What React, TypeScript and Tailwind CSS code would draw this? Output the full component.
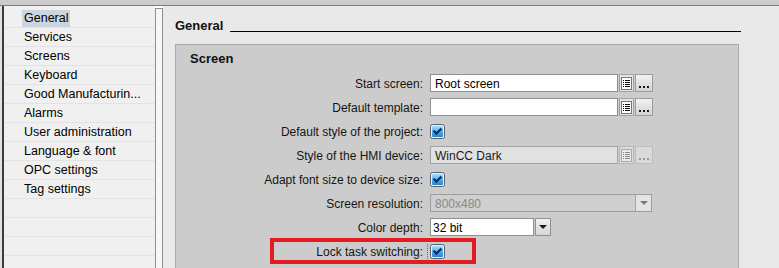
import React from "react";

const NAV_ITEMS = [
  "General",
  "Services",
  "Screens",
  "Keyboard",
  "Good Manufacturin...",
  "Alarms",
  "User administration",
  "Language & font",
  "OPC settings",
  "Tag settings",
  "",
  "",
  "",
  "",
];

const FONT = "font-['Liberation_Sans',Arial,sans-serif]";

function Checkbox() {
  return (
    <svg width="15" height="15" viewBox="0 0 15 15" className="block">
      <defs>
        <linearGradient id="cbFill" x1="0" y1="0" x2="0" y2="1">
          <stop offset="0" stopColor="#a8dcfb" />
          <stop offset="0.5" stopColor="#55b4f0" />
          <stop offset="1" stopColor="#2380d4" />
        </linearGradient>
      </defs>
      <rect x="0.5" y="0.5" width="14" height="14" rx="2" fill="#e8f2fa" stroke="#56626e" />
      <rect x="2" y="2" width="11" height="11" rx="1" fill="url(#cbFill)" />
      <path d="M3.6 6.8 L6.4 9.6 L11.4 4.6" stroke="#0b2f66" strokeWidth="2.2" fill="none" />
    </svg>
  );
}

function ListButton({ disabled }: { disabled?: boolean }) {
  const line = disabled ? "#8a8a8a" : "#111";
  return (
    <div
      className={
        disabled
          ? "w-[15px] h-[18px] ml-[1px] border border-[#b8b8b8] bg-[#dcdcdc] flex items-center justify-center"
          : "w-[15px] h-[18px] ml-[1px] border border-[#a0a0a0] bg-[#e6e6e6] flex items-center justify-center"
      }
    >
      <svg width="11" height="13" viewBox="0 0 11 13">
        <rect
          x="0.5"
          y="0.5"
          width="10"
          height="12"
          fill={disabled ? "#ececec" : "#ffffff"}
          stroke={disabled ? "#a8a8a8" : "#5b6fd8"}
        />
        {[3, 5, 7, 9].map((y) => (
          <g key={y}>
            <rect x="2" y={y} width="1" height="1" fill={line} />
            <rect x="4" y={y} width="5" height="1" fill={line} />
          </g>
        ))}
      </svg>
    </div>
  );
}

function DotsButton({ disabled }: { disabled?: boolean }) {
  return (
    <div
      className={
        disabled
          ? "w-[18px] h-[18px] ml-[1px] border border-[#bdbdbd] bg-[#dadada] flex items-end justify-center pb-[3px]"
          : "w-[18px] h-[18px] ml-[1px] border border-[#9c9c9c] bg-gradient-to-b from-[#f2f2f2] to-[#d2d2d2] flex items-end justify-center pb-[3px]"
      }
    >
      <svg width="10" height="2" viewBox="0 0 10 2">
        {[0, 4, 8].map((x) => (
          <rect key={x} x={x} y="0" width="2" height="2" fill={disabled ? "#9a9a9a" : "#1a1a1a"} />
        ))}
      </svg>
    </div>
  );
}

function Arrow({ disabled }: { disabled?: boolean }) {
  return (
    <svg width="8" height="4" viewBox="0 0 8 4">
      <path d="M0 0 H8 L4 4 Z" fill={disabled ? "#7a7a7a" : "#1a1a1a"} />
    </svg>
  );
}

function Row({ label, children }: { label?: string; children?: React.ReactNode }) {
  return (
    <div className="relative h-[24px] flex items-center">
      <div className="w-[248px] text-right pr-[1px] pt-[2px] text-[#151515]">{label}</div>
      <div className="ml-[6px] flex items-center">{children}</div>
    </div>
  );
}

export default function App() {
  return (
    <div className={`w-[779px] h-[268px] overflow-hidden flex flex-col text-[12px] ${FONT}`}>
      <div className="h-[6px] shrink-0 bg-[#cbcbcb] border-b border-[#7d7d7d]" />
      <div className="flex flex-1 min-h-0">
        <div className="w-[2px] bg-[#e2e2e2]" />
        <div className="w-[2px] bg-[#3a3d45]" />
        <div className="w-[151px] bg-[#f0f0f0] pt-[3px]">
          {NAV_ITEMS.map((item, i) => (
            <div key={i} className="h-[19px] border-b border-[#e3e3e3] pl-[18px] flex items-center text-black text-[12.5px]">
              {i === 0 ? (
                <span className="bg-[#cbd5df] px-[2px] h-[17px] flex items-center">{item}</span>
              ) : (
                <span className="px-[2px]">{item}</span>
              )}
            </div>
          ))}
        </div>
        <div className="w-[8px] mt-[2px] border-x border-t border-[#8e8e8e] bg-[#f7f7f7]" />
        <div className="flex-1 bg-[#e9e9e9] pl-[12px] pr-[38px] pt-[12px]">
          <div className="h-[16px] flex items-end">
            <span className="font-bold text-[13px] leading-[16px] text-[#111]">General</span>
            <div className="flex-1 h-[1px] bg-black ml-[7px] mb-[2px]" />
          </div>
          <div className="mt-[10px] mr-[2px] border border-[#a9a9a9] bg-[#cccccc] h-[300px]">
            <div className="h-[26px] pl-[14px] pt-[1px] flex items-center font-bold text-[13px] text-[#111]">
              Screen
            </div>
            <Row label="Start screen:">
              <div className="w-[188px] h-[18px] border border-[#8f8f8f] bg-white pl-[4px] pt-[1px] flex items-center text-black">
                Root screen
              </div>
              <ListButton />
              <DotsButton />
            </Row>
            <Row label="Default template:">
              <div className="w-[188px] h-[18px] border border-[#8f8f8f] bg-white" />
              <ListButton />
              <DotsButton />
            </Row>
            <Row label="Default style of the project:">
              <Checkbox />
            </Row>
            <Row label="Style of the HMI device:">
              <div className="w-[188px] h-[18px] border border-[#a3a3a3] bg-[#e1e1e1] pl-[4px] pt-[1px] flex items-center text-[#1a1a1a]">
                WinCC Dark
              </div>
              <ListButton disabled />
              <DotsButton disabled />
            </Row>
            <Row label="Adapt font size to device size:">
              <Checkbox />
            </Row>
            <Row label="Screen resolution:">
              <div className="w-[222px] h-[18px] border border-[#9d9d9d] bg-[#cfcfcf] flex items-center">
                <span className="flex-1 pl-[4px] pt-[1px] text-[#8a8a8a]">800x480</span>
                <div className="w-[16px] h-full border-l border-[#a8a8a8] bg-[#e4e4e4] flex items-center justify-center">
                  <Arrow disabled />
                </div>
              </div>
            </Row>
            <Row label="Color depth:">
              <div className="w-[104px] h-[18px] border border-[#8f8f8f] bg-white pl-[2px] pt-[1px] flex items-center text-black">
                32 bit
              </div>
              <div className="w-[16px] h-[18px] ml-[1px] border border-[#8f8f8f] bg-gradient-to-b from-[#f0f0f0] to-[#d6d6d6] flex items-center justify-center">
                <Arrow />
              </div>
            </Row>
            <Row label="Lock task switching:">
              <div className="-ml-[3px] mr-[2px] h-[15px] border-l border-dotted border-[#5a6a8a]" />
              <Checkbox />
              <div className="absolute left-[94px] -top-[1px] w-[206px] h-[26px] border-[4px] border-[#e31b23]" />
            </Row>
            <Row>
              <Checkbox />
            </Row>
          </div>
        </div>
      </div>
    </div>
  );
}
